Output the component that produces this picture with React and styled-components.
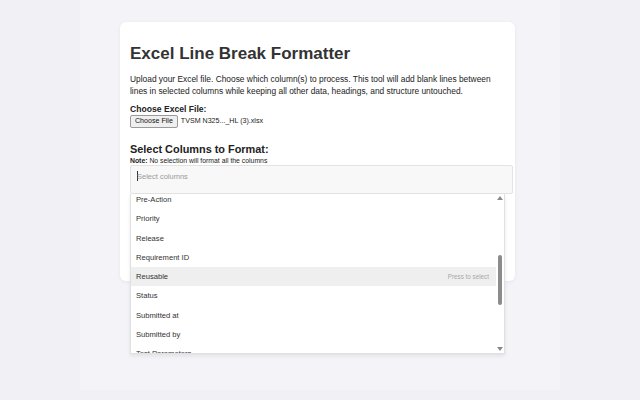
import styled, { createGlobalStyle } from "styled-components";

const GlobalStyle = createGlobalStyle`
  html, body {
    margin: 0;
    padding: 0;
    background: #f1f0f5;
    font-family: "Liberation Sans", Arial, sans-serif;
  }
`;

const Page = styled.div`
  width: 480px;
  min-height: 390px;
  margin: 0 auto;
  padding: 22px 0 0 40px;
  box-sizing: border-box;
  background: #f4f3f8;
`;

const Card = styled.div`
  width: 395px;
  box-sizing: border-box;
  padding: 20px 10px 87px;
  background: #fff;
  border-radius: 6px;
  box-shadow: 0 1px 4px rgba(0, 0, 0, 0.06);
`;

const Title = styled.h1`
  margin: 0 0 8px;
  font-size: 17px;
  line-height: 24px;
  font-weight: bold;
  color: #333;
`;

const Intro = styled.p`
  margin: 0 0 7px;
  font-size: 8.4px;
  line-height: 11.5px;
  color: #222;
`;

const Label = styled.div`
  font-size: ${(p) => (p.$big ? "10.9px" : "8.6px")};
  line-height: ${(p) => (p.$big ? "12px" : "10px")};
  font-weight: bold;
  color: #222;
`;

const FileRow = styled.div`
  display: flex;
  align-items: center;
  gap: 3px;
  margin-top: 1px;
  font-size: 7.1px;
  color: #222;
`;

const FileButton = styled.span`
  display: inline-block;
  padding: 1px 4px;
  border: 1px solid #9a9a9a;
  border-radius: 2px;
  background: #efefef;
  font-size: 7.1px;
  line-height: 8.5px;
  color: #111;
`;

const Section = styled.div`
  margin-top: 15px;
`;

const Note = styled.div`
  margin-top: 1px;
  font-size: 6.85px;
  line-height: 9px;
  color: #222;
`;

const SelectWrap = styled.div`
  position: relative;
`;

const SelectBox = styled.div`
  width: calc(100% + 8px);
  height: 29px;
  box-sizing: border-box;
  display: flex;
  align-items: center;
  padding: 0 6px 6px;
  background: #f8f8f8;
  border: 1px solid #e3e3e3;
  border-radius: 2px;
  font-size: 7.5px;
  color: #9a9a9a;
`;

const Caret = styled.span`
  display: inline-block;
  width: 1px;
  height: 10px;
  margin-right: -1px;
  background: #333;
`;

const Menu = styled.div`
  position: absolute;
  top: 29px;
  left: 0;
  width: 375px;
  height: 160px;
  display: flex;
  background: #fff;
  border: 1px solid #e0e0e0;
  border-top: none;
  box-sizing: border-box;
  box-shadow: 0 2px 4px rgba(0, 0, 0, 0.08);
  overflow: hidden;
`;

const List = styled.div`
  flex: 1;
  margin-top: -23px;
`;

const Item = styled.div`
  height: 19.3px;
  display: flex;
  align-items: center;
  justify-content: space-between;
  padding: 0 7px 0 5px;
  font-size: 7.6px;
  color: #333;
  background: ${(p) => (p.$active ? "#efefef" : "transparent")};
`;

const Hint = styled.span`
  font-size: 6.3px;
  color: #a8a8a8;
`;

const Scrollbar = styled.div`
  width: 8px;
  display: flex;
  flex-direction: column;
  align-items: center;
  background: #fff;
`;

const Arrow = styled.div`
  height: 8px;
  display: flex;
  align-items: center;
  justify-content: center;
`;

const Track = styled.div`
  flex: 1;
  width: 100%;
  display: flex;
  justify-content: center;
`;

const Thumb = styled.div`
  width: 4px;
  height: 50px;
  margin-top: 53px;
  border-radius: 2px;
  background: #8c8c8c;
`;

const columns = [
  "Owner",
  "Pre-Action",
  "Priority",
  "Release",
  "Requirement ID",
  "Reusable",
  "Status",
  "Submitted at",
  "Submitted by",
  "Test Parameters",
];

const Tri = ({ up }) => (
  <svg width="6" height="4" viewBox="0 0 6 4">
    <path d={up ? "M0 4 L3 0 L6 4 Z" : "M0 0 L3 4 L6 0 Z"} fill="#8a8a8a" />
  </svg>
);

const App = () => {
  return (
    <>
      <GlobalStyle />
      <Page>
        <Card>
          <Title>Excel Line Break Formatter</Title>
          <Intro>
            Upload your Excel file. Choose which column(s) to process. This tool
            will add blank lines between lines in selected columns while keeping
            all other data, headings, and structure untouched.
          </Intro>
          <Label>Choose Excel File:</Label>
          <FileRow>
            <FileButton>Choose File</FileButton>
            TVSM N325..._HL (3).xlsx
          </FileRow>
          <Section>
            <Label $big>Select Columns to Format:</Label>
            <Note>
              <b>Note:</b> No selection will format all the columns
            </Note>
            <SelectWrap>
              <SelectBox>
                <Caret />
                Select columns
              </SelectBox>
              <Menu>
                <List>
                  {columns.map((c) => (
                    <Item key={c} $active={c === "Reusable"}>
                      {c}
                      {c === "Reusable" && <Hint>Press to select</Hint>}
                    </Item>
                  ))}
                </List>
                <Scrollbar>
                  <Arrow>
                    <Tri up />
                  </Arrow>
                  <Track>
                    <Thumb />
                  </Track>
                  <Arrow>
                    <Tri />
                  </Arrow>
                </Scrollbar>
              </Menu>
            </SelectWrap>
          </Section>
        </Card>
      </Page>
    </>
  );
};

export default App;
